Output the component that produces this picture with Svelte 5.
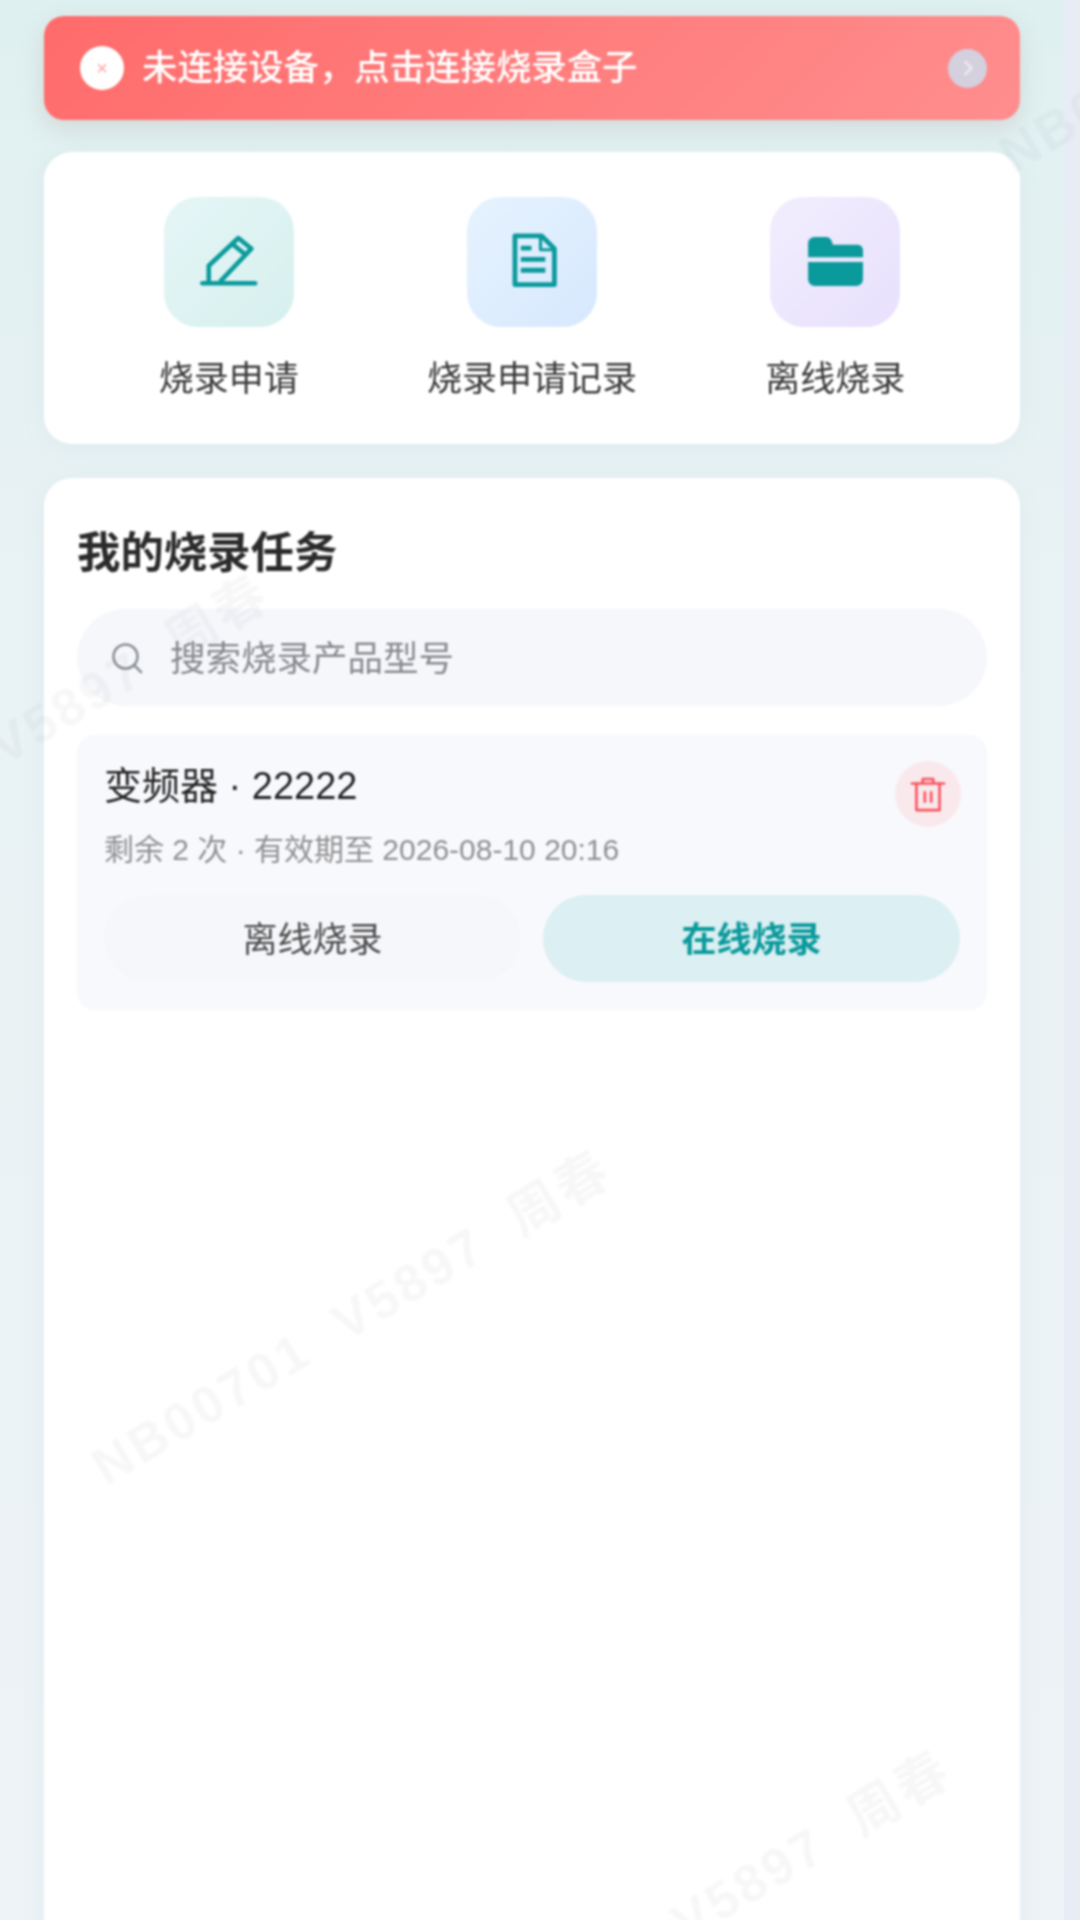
<script>
  const shortcuts = [
    { label: '烧录申请', tone: 'mint', icon: 'pen' },
    { label: '烧录申请记录', tone: 'sky', icon: 'doc' },
    { label: '离线烧录', tone: 'violet', icon: 'folder' }
  ];

  // left/top of each repeated watermark, inline because they come from this list
  const marks = [
    { x: 97, y: 1445 },
    { x: 437, y: 2045 },
    { x: -245, y: 869 },
    { x: 1004, y: 133 }
  ];
</script>

<div class="page">
  <main class="content">
    <button class="banner">
      <span class="banner-x">×</span>
      <span class="banner-text">未连接设备，点击连接烧录盒子</span>
      <span class="banner-go">
        <svg viewBox="0 0 24 24" width="24" height="24" fill="none" stroke="#ebe6f0" stroke-width="3" stroke-linecap="round" stroke-linejoin="round"><path d="M9.5 6l6 6-6 6" /></svg>
      </span>
    </button>

    <section class="card shortcuts">
      {#each shortcuts as s}
        <div class="shortcut">
          <div class="tile {s.tone}">
            {#if s.icon === 'pen'}
              <svg viewBox="0 0 24 24" width="64" height="64" fill="none" stroke="#0b9a9c" stroke-width="1.7" stroke-linejoin="round" stroke-linecap="round">
                <path d="M2 20h19.8" />
                <path d="M4.4 19v-5.6L15.5 3l4.9 4L9 19" />
                <path d="M13.5 5.4l4.6 3.8" />
              </svg>
            {:else if s.icon === 'doc'}
              <svg viewBox="0 0 24 24" width="64" height="64" fill="none" stroke="#0b9a9c" stroke-width="1.8" stroke-linejoin="round">
                <path d="M5.6 2.2h10l4.8 4.8v13.5H5.6z" />
                <path d="M15.2 2.6v4.8h4.8" stroke-width="1.2" />
                <path d="M7.8 6.8h4M7.8 11h9.2M7.8 15.1h9.2" />
              </svg>
            {:else}
              <svg viewBox="0 0 24 24" width="64" height="64" fill="#0b9a9c">
                <path d="M1.9 5a2.4 2.4 0 0 1 2.4-2.4h4.2a2.5 2.5 0 0 1 2.4 2l.3.9h9.3a2 2 0 0 1 2 2v2.7H1.9z" />
                <path d="M1.9 12h20.6v6.5a2.5 2.5 0 0 1-2.5 2.5H4.4a2.5 2.5 0 0 1-2.5-2.5z" />
              </svg>
            {/if}
          </div>
          <span class="shortcut-label">{s.label}</span>
        </div>
      {/each}
    </section>

    <section class="card tasks">
      <h2>我的烧录任务</h2>

      <div class="search">
        <svg viewBox="0 0 24 24" width="36" height="36" fill="none" stroke="#8c8f94" stroke-width="1.7" stroke-linecap="round"><circle cx="11" cy="11" r="8" /><path d="M17 17l4.4 4.4" /></svg>
        <span class="search-text">搜索烧录产品型号</span>
      </div>

      <article class="task">
        <div class="task-head">
          <div class="task-name">变频器 · 22222</div>
          <button class="trash" aria-label="删除">
            <svg viewBox="0 0 24 24" width="42" height="42" fill="none" stroke="#f9545f" stroke-width="1.5" stroke-linejoin="round" stroke-linecap="round">
              <path d="M2.8 6h18.4" /><path d="M9 5.6V3.4h6v2.2" /><path d="M5.4 6.2v15h13.2v-15" /><path d="M10.2 11v5.4M13.8 11v5.4" />
            </svg>
          </button>
        </div>
        <div class="task-meta">剩余 2 次 · 有效期至 2026-08-10 20:16</div>
        <div class="task-actions">
          <button class="act offline">离线烧录</button>
          <button class="act online">在线烧录</button>
        </div>
      </article>
    </section>
  </main>

  <div class="scrollbar"></div>

  {#each marks as m}
    <span class="mark" style="left: {m.x}px; top: {m.y}px">NB00701&nbsp; V5897&nbsp; 周春</span>
  {/each}
</div>

<style>
  :global(body) { margin: 0; }
  .page {
    position: relative;
    display: flex;
    width: 1080px;
    height: 1920px;
    overflow: hidden;
    background: linear-gradient(180deg, #dff0f0 0%, #e9f2f4 30%, #edf3f6 100%);
    font-family: "Liberation Sans", "Noto Sans CJK SC", sans-serif;
    color: #333;
  }
  .content {
    flex: 1;
    min-width: 0;
    padding: 16px 44px 0 44px;
    display: flex;
    flex-direction: column;
    filter: blur(0.8px);
  }
  button { font-family: inherit; border: none; padding: 0; }

  .banner {
    height: 104px;
    flex: none;
    display: flex;
    align-items: center;
    padding: 0 33px 0 36px;
    border-radius: 20px;
    background: linear-gradient(135deg, #ff6b6b, #ff8e8e);
    box-shadow: 0 8px 24px rgba(140, 110, 110, 0.18);
    color: #fff;
  }
  .banner-x {
    width: 44px;
    height: 44px;
    flex: none;
    border-radius: 50%;
    background: #fff;
    color: #ffa3a3;
    font-size: 20px;
    line-height: 44px;
    text-align: center;
  }
  .banner-text { margin-left: 18px; flex: 1; text-align: left; font-size: 35.4px; font-weight: 500; line-height: 44px; }
  .banner-go {
    width: 39px;
    height: 39px;
    border-radius: 50%;
    background: #d4d0dd;
    display: flex;
    align-items: center;
    justify-content: center;
  }

  .card {
    background: #fff;
    border-radius: 28px;
    box-shadow: 0 4px 24px rgba(120, 150, 170, 0.08);
  }
  .shortcuts {
    flex: none;
    margin-top: 32px;
    padding: 45px 33px 43px;
    display: grid;
    grid-template-columns: repeat(3, 1fr);
  }
  .shortcut { display: flex; flex-direction: column; align-items: center; }
  .tile {
    width: 130px;
    height: 130px;
    border-radius: 34px;
    display: flex;
    align-items: center;
    justify-content: center;
  }
  .mint { background: linear-gradient(135deg, #e6f6f7, #d6f0ee); }
  .sky { background: linear-gradient(135deg, #e6f3fe, #d7e8fe); }
  .violet { background: linear-gradient(135deg, #f2eefd, #e8e0fd); }
  .shortcut-label { margin-top: 30px; font-size: 35px; line-height: 44px; color: #3a3a3a; }

  /* runs past the fold, so its bottom corners stay off screen */
  .tasks { flex: none; min-height: 1500px; margin-top: 34px; padding: 48px 33px 0; }
  h2 { margin: 0; font-size: 43.4px; line-height: 54px; font-weight: 700; color: #2b2b2b; }

  .search {
    margin-top: 29px;
    height: 97px;
    border-radius: 49px;
    background: #f5f7fb;
    display: flex;
    align-items: center;
    padding-left: 32px;
    gap: 25px;
    font-size: 35.5px;
    color: #87898e;
  }
  .search-text { margin-top: -4px; }

  .task {
    margin-top: 29px;
    padding: 24px 27px 28px;
    border-radius: 18px;
    background: #f8f9fd;
  }
  .task-head { display: flex; justify-content: space-between; align-items: flex-start; }
  .task-name { font-size: 38px; line-height: 54px; color: #222; }
  .trash {
    width: 66px;
    height: 66px;
    margin-top: 2px;
    margin-right: -1px;
    border-radius: 50%;
    background: #fae9ec;
    display: flex;
    align-items: center;
    justify-content: center;
  }
  .task-meta { margin-top: 4px; font-size: 30px; line-height: 38px; color: #909090; }
  .task-actions { margin-top: 26px; display: flex; gap: 22px; }
  .act { flex: 1; height: 87px; padding-bottom: 4px; border-radius: 44px; font-size: 35px; }
  .offline { background: #f6f7fb; color: #4c4c4c; }
  .online { background: #dceff2; color: #0b9a9c; font-weight: 700; }

  .scrollbar { width: 16px; flex: none; background: #e8ecf5; }

  .mark {
    position: absolute;
    font-size: 52px;
    font-weight: 700;
    letter-spacing: 3.5px;
    line-height: 1;
    white-space: nowrap;
    color: rgba(40, 60, 70, 0.04);
    transform: rotate(-31deg);
    transform-origin: left center;
    pointer-events: none;
    filter: blur(0.8px);
  }
</style>
